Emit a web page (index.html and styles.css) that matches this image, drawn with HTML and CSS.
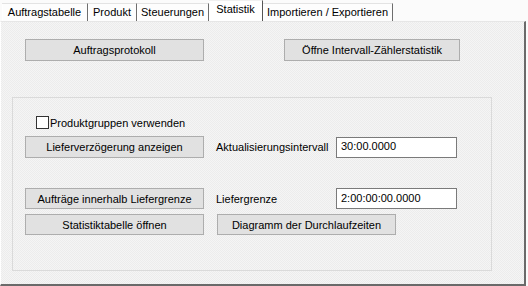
FILE: index.html
```html
<!DOCTYPE html>
<html lang="de">
<head>
    <meta charset="UTF-8">
    <title>Statistik</title>
    <link rel="stylesheet" href="styles.css">
</head>
<body>
    <div class="tabs">
        <div class="tab tab-auftrag">Auftragstabelle</div>
        <div class="tab tab-produkt">Produkt</div>
        <div class="tab tab-steuer">Steuerungen</div>
        <div class="tab tab-statistik active">Statistik</div>
        <div class="tab tab-import">Importieren / Exportieren</div>
    </div>

    <div class="panel">
        <div class="top-row">
            <button class="btn btn-protokoll">Auftragsprotokoll</button>
            <button class="btn btn-intervall">Öffne Intervall-Zählerstatistik</button>
        </div>

        <div class="group">
            <label class="check-row">
                <span class="checkbox"></span>Produktgruppen verwenden
            </label>

            <div class="row row-verz">
                <button class="btn btn-wide">Lieferverzögerung anzeigen</button>
                <span class="field-label">Aktualisierungsintervall</span>
                <input class="field" type="text" value="30:00.0000">
            </div>

            <div class="row row-grenze">
                <button class="btn btn-wide">Aufträge innerhalb Liefergrenze</button>
                <span class="field-label">Liefergrenze</span>
                <input class="field" type="text" value="2:00:00:00.0000">
            </div>

            <div class="row row-tabelle">
                <button class="btn btn-wide">Statistiktabelle öffnen</button>
                <button class="btn btn-diagramm">Diagramm der Durchlaufzeiten</button>
            </div>
        </div>
    </div>
</body>
</html>
```

FILE: styles.css
```css
body {
    margin: 0;
    width: 528px;
    height: 286px;
    background-color: #fbfbfb;
    font-family: 'Liberation Sans', Arial, sans-serif;
    font-size: 11px;
    color: #000;
    overflow: hidden;
}

/* tab strip */
.tabs {
    display: flex;
    height: 21px;
    padding-left: 2px;
    align-items: flex-end;
}

.tab {
    box-sizing: border-box;
    height: 18px;
    line-height: 16px;
    text-align: center;
    background-color: #fdfdfd;
    border-top: 1px solid #e3e3e3;
    border-right: 1px solid #6e6e6e;
    box-shadow: inset 1px 0 0 #ffffff;
}

.tab-auftrag { width: 86px; }
.tab-produkt { width: 49px; }
.tab-steuer { width: 72px; }
.tab-statistik { width: 54px; }
.tab-import { width: 130px; }

.tab.active {
    height: 21px;
    line-height: 16px;
    background-color: #ffffff;
    border-top: 1px solid #f0f0f0;
    border-right: 1px solid #555;
    position: relative;
    z-index: 1;
}

/* page of the tab control */
.panel {
    box-sizing: border-box;
    width: 526px;
    height: 265px;
    padding: 17px 0 0 24px;
    border-top: 1px solid #e6e6e6;
    border-left: 1px solid #ffffff;
    border-right: 2px solid #6a6a6a;
    border-bottom: 2px solid #6a6a6a;
    background: repeating-conic-gradient(#ececec 0 25%, #f5f5f5 0 50%) 0 0 / 2px 2px;
}

.top-row {
    display: flex;
    gap: 80px;
}

.btn {
    box-sizing: border-box;
    height: 21px;
    padding: 0;
    font-family: inherit;
    font-size: 11px;
    color: #000;
    background-color: #e1e1e1;
    border: 1px solid #adadad;
    border-radius: 0;
}

.btn-protokoll {
    width: 179px;
    height: 22px;
}

.btn-intervall {
    width: 176px;
    height: 22px;
}

/* Gruppe */
.group {
    box-sizing: border-box;
    width: 480px;
    height: 174px;
    margin: 36px 0 0 -13px;
    padding: 18px 0 0 12px;
    border: 1px solid #dadada;
}

.check-row {
    display: flex;
    align-items: center;
    height: 13px;
    margin-left: 11px;
}

.checkbox {
    box-sizing: border-box;
    width: 13px;
    height: 13px;
    margin-right: 1px;
    background-color: #ffffff;
    border: 1px solid #333333;
}

.row {
    display: flex;
    align-items: center;
}

.row-verz {
    margin-top: 7px;
}

.row-verz .btn {
    height: 22px;
}

.row-grenze {
    margin-top: 30px;
}

.row-tabelle {
    margin-top: 5px;
    gap: 13px;
}

.btn-wide {
    width: 179px;
}

.btn-diagramm {
    width: 179px;
}

.field-label {
    width: 120px;
    margin-left: 12px;
}

.field {
    box-sizing: border-box;
    width: 121px;
    height: 21px;
    padding: 0 0 2px 4px;
    font-family: inherit;
    font-size: 11px;
    color: #000;
    background-color: #ffffff;
    border: 1px solid #7a7a7a;
    outline: none;
}
```
